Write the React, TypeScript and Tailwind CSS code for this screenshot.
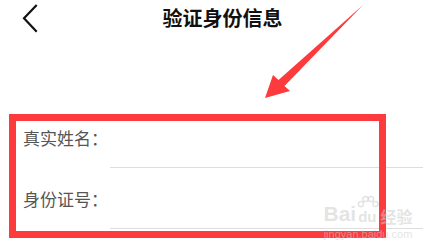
import React from 'react';

const font = { fontFamily: '"Noto Sans CJK SC", "Noto Sans", sans-serif' };
const latin = { fontFamily: '"Liberation Sans", sans-serif' };

const fields = ['真实姓名：', '身份证号：'];

export default function App() {
  return (
    <div className="relative w-[440px] h-[251px] overflow-hidden bg-white" style={font}>
      {/* header */}
      <div className="relative flex items-center justify-center h-[36px]">
        <svg className="absolute left-[20px] top-[3px]" width="22" height="32" viewBox="0 0 22 32">
          <path d="M16.7 2 L4 15.3 L16.7 28.7" fill="none" stroke="#111" strokeWidth="2.2" />
        </svg>
        <h1 className="text-[20px] leading-[28px] font-bold text-[#111] pl-[5px]">验证身份信息</h1>
      </div>

      {/* form */}
      <div className="mt-[71px]">
        {fields.map((label) => (
          <div key={label} className="flex h-[61px]">
            <div className="w-[110px] pl-[23px] pt-[19px] text-[17px] leading-[24px] text-[#555]">{label}</div>
            <div className="flex-1 mr-[17px] border-b border-[#dedede]" />
          </div>
        ))}
      </div>

      {/* annotation box */}
      <div className="absolute left-[9px] top-[114px] w-[377px] h-[124px] border-[7px] border-[#fd3a3c]" />

      {/* annotation arrow */}
      <svg className="absolute left-0 top-0" width="440" height="251" viewBox="0 0 440 251">
        <polygon points="363,5 284.5,86 290,91 265,98 273,75 278.5,80" fill="#fd3a3c" />
      </svg>

      {/* watermark */}
      <div className="absolute left-[322px] top-[196px] w-[92px] flex flex-col items-center text-[rgba(205,205,205,0.55)] leading-none">
        <div className="flex items-end h-[28px]">
          <span className="text-[21px] font-bold" style={latin}>Bai</span>
          <span className="relative flex items-end text-[15px] font-bold ml-[2px]" style={latin}>
            <svg className="absolute left-[-1px] top-[-14px]" width="22" height="16" viewBox="0 0 22 16">
              <circle cx="4" cy="9" r="2.6" fill="none" stroke="currentColor" strokeWidth="1.5" />
              <circle cx="8.5" cy="4" r="2.6" fill="none" stroke="currentColor" strokeWidth="1.5" />
              <circle cx="14" cy="4" r="2.6" fill="none" stroke="currentColor" strokeWidth="1.5" />
              <circle cx="18.5" cy="9" r="2.6" fill="none" stroke="currentColor" strokeWidth="1.5" />
            </svg>
            du
          </span>
          <span className="text-[16px] font-bold ml-[4px]">经验</span>
        </div>
        <span className="text-[11px] mt-[5px]" style={latin}>jingyan.baidu.com</span>
      </div>
    </div>
  );
}
